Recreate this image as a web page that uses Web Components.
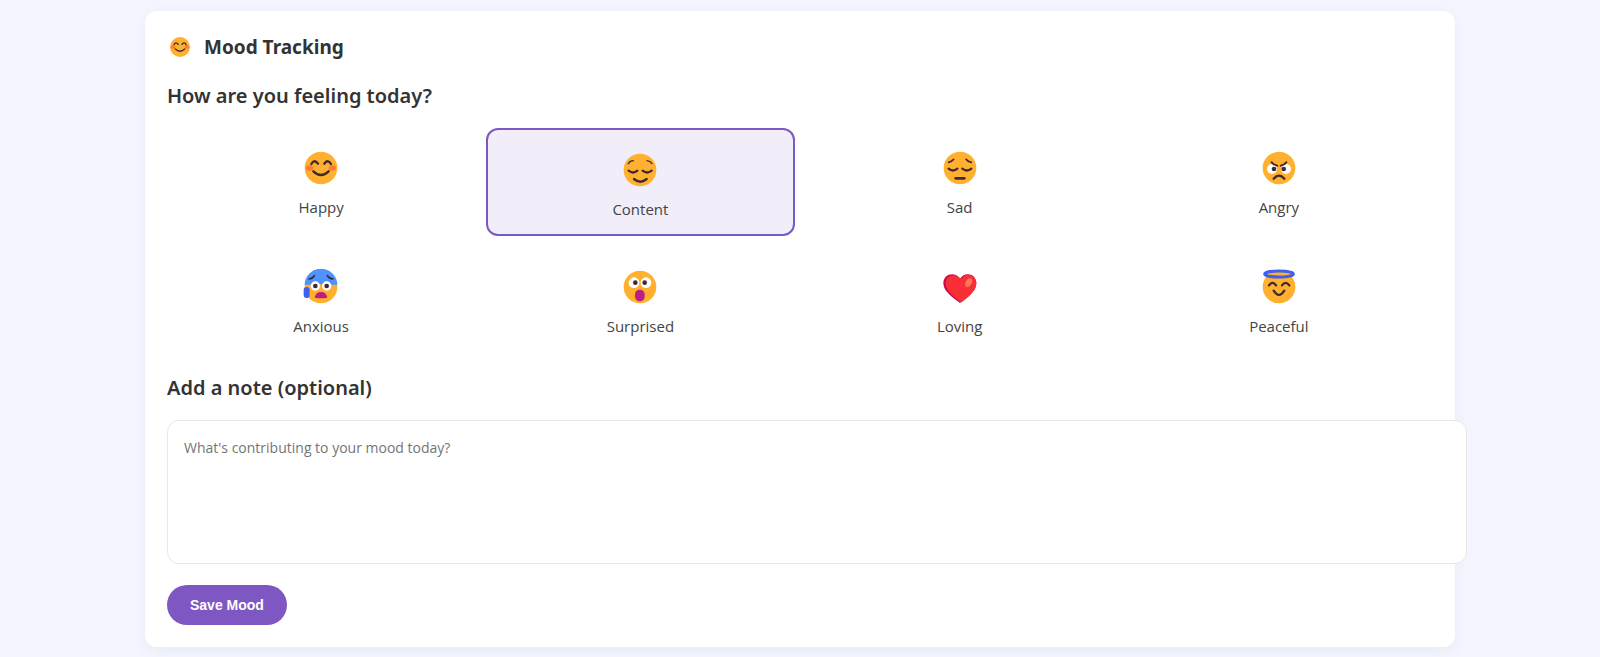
<!DOCTYPE html>
<html lang="en">
<head>
<meta charset="utf-8">
<meta name="viewport" content="width=device-width, initial-scale=1">
<title>Mood Tracking</title>
<style>
  body { margin: 0; padding: 11px 22px 10px; background: #f3f6ff; color: #333; font-family: "Open Sans", "Noto Sans", sans-serif; font-size: 15px; }
</style>
</head>
<body>
<mood-card>
  <mood-face slot="icon" name="happy" style="--size: 22px"></mood-face>
  <span slot="title">Mood Tracking</span>
  <section-title>How are you feeling today?</section-title>
  <mood-grid>
    <mood-option face="happy">Happy</mood-option>
    <mood-option face="content" selected>Content</mood-option>
    <mood-option face="sad">Sad</mood-option>
    <mood-option face="angry">Angry</mood-option>
    <mood-option face="anxious">Anxious</mood-option>
    <mood-option face="surprised">Surprised</mood-option>
    <mood-option face="loving">Loving</mood-option>
    <mood-option face="peaceful">Peaceful</mood-option>
  </mood-grid>
  <mood-note placeholder="What's contributing to your mood today?">Add a note (optional)</mood-note>
  <save-button>Save Mood</save-button>
</mood-card>

<script>
const shadow = (el, html) => {
  const t = document.createElement('template');
  t.innerHTML = html;
  el.attachShadow({ mode: 'open' }).append(t.content.cloneNode(true));
  return el.shadowRoot;
};

const head = '<circle cx="54" cy="54" r="49" fill="#ffb02e"/>';
const line = (d, w = 7) => `<path d="${d}" fill="none" stroke="#402a32" stroke-width="${w}" stroke-linecap="round"/>`;
const eyes = (x1, x2, y, r, p1 = x1, p2 = x2) =>
  `<g fill="#fff"><circle cx="${x1}" cy="${y}" r="${r}"/><circle cx="${x2}" cy="${y}" r="${r}"/></g>
   <g fill="#402a32"><circle cx="${p1}" cy="${y}" r="7"/><circle cx="${p2}" cy="${y}" r="7"/></g>`;

const FACES = {
  happy: head + '<g fill="#ff7a35"><ellipse cx="20" cy="54" rx="11" ry="8"/><ellipse cx="88" cy="54" rx="11" ry="8"/></g>'
    + line('M25 42Q34 26 45 41M64 41Q74 26 84 42') + line('M31 64Q54 86 77 64'),
  content: head + line('M19 35Q24 26 34 26M75 26Q84 27 90 35', 4)
    + line('M20 56Q33 67 46 56M62 56Q75 67 89 56') + line('M36 81Q55 97 74 81'),
  sad: head + line('M20 37Q29 36 35 28M72 28Q78 36 88 37', 5)
    + line('M20 56Q33 67 46 56M61 56Q75 67 88 56') + line('M41 85H67', 8),
  angry: head + eyes(33, 75, 57, 15, 39, 68) + line('M32 37Q38 45 49 47M76 37Q70 45 59 47', 6) + line('M38 86Q54 68 70 86'),
  anxious: head + '<path d="M5 48A49 49 0 0 1 103 48Q54 44 5 48Z" fill="#5092ff"/>' + eyes(37, 71, 51, 14)
    + line('M18 30Q29 29 34 20M73 20Q79 29 90 30', 5)
    + '<path d="M35 86Q38 69 54 69T73 86Q54 90 35 86Z" fill="#bb1d80"/><rect x="2" y="54" width="18" height="33" rx="9" fill="#3f5fee"/>',
  surprised: head + eyes(36, 72, 41, 16, 40, 68) + '<rect x="39" y="62" width="29" height="35" rx="14" fill="#bb1d80"/>',
  loving: '<path d="M54 102C34 87 4 68 4 43C4 14 39 6 54 29C69 6 103 14 103 43C103 68 74 87 54 102Z" fill="#ca0b4a"/><path d="M58 100C39 86 11 66 11 43C11 18 42 10 57 31C71 8 103 16 103 43C103 68 74 88 58 100Z" fill="#f92f36"/><ellipse cx="80" cy="41" rx="9" ry="14" transform="rotate(28 80 41)" fill="#ff785c"/>',
  peaceful: head + '<ellipse cx="54" cy="15" rx="43" ry="9" fill="#ffb02e" stroke="#3f5fee" stroke-width="9"/>'
    + line('M24 49Q35 34 45 49M63 49Q74 34 85 49') + line('M38 65Q54 90 70 65')
};

customElements.define('mood-face', class extends HTMLElement {
  connectedCallback() {
    if (this.shadowRoot) return;
    shadow(this, `<style>
      :host { display: block; width: var(--size, 36px); height: var(--size, 36px); }
      svg { display: block; width: 100%; height: 100%; }
    </style><svg viewBox="0 0 108 108" aria-hidden="true">${FACES[this.getAttribute('name')]}</svg>`);
  }
});

customElements.define('mood-card', class extends HTMLElement {
  constructor() {
    super();
    shadow(this, `<style>
      :host { display: block; box-sizing: border-box; max-width: 1310px; margin: 0 auto; padding: 22px; background: #fff; border-radius: 12px; box-shadow: 0 4px 16px rgba(0, 0, 0, .05); }
      header { display: flex; align-items: center; gap: 11px; margin-bottom: 21px; }
      .icon { width: 26px; display: flex; justify-content: center; }
      h2 { margin: 0; font-family: "Noto Sans", sans-serif; font-size: 19px; line-height: 28px; font-weight: 700; }
    </style><header><div class="icon"><slot name="icon"></slot></div><h2><slot name="title"></slot></h2></header><slot></slot>`);
  }
});

customElements.define('section-title', class extends HTMLElement {
  constructor() {
    super();
    shadow(this, `<style>
      :host { display: block; margin-bottom: 18px; }
      h3 { margin: 0; font-family: "Noto Sans", sans-serif; font-size: 20px; line-height: 28px; font-weight: 600; }
    </style><h3><slot></slot></h3>`);
  }
});

customElements.define('mood-grid', class extends HTMLElement {
  constructor() {
    super();
    shadow(this, `<style>
      :host { display: grid; grid-template-columns: repeat(4, 1fr); gap: 11px; margin-bottom: 23px; }
      @media (max-width: 600px) { :host { grid-template-columns: repeat(2, 1fr); } }
    </style><slot></slot>`);
    this.addEventListener('click', e => {
      const option = e.target.closest('mood-option');
      if (option) for (const o of this.children) o.toggleAttribute('selected', o === option);
    });
  }
});

customElements.define('mood-option', class extends HTMLElement {
  static observedAttributes = ['selected'];
  connectedCallback() {
    if (this.shadowRoot) return;
    shadow(this, `<style>
      :host { display: grid; }
      button { display: flex; flex-direction: column; align-items: center; margin: 0; padding: 16px 16px 15px; border: 0; border-radius: 12px; background: none; color: #444; font: inherit; line-height: 20px; cursor: pointer; }
      .face { display: flex; align-items: center; height: 48px; margin-bottom: 5px; }
      :host([selected]) button { border: 2px solid #7e57c2; background: #f1edf9; }
    </style><button type="button"><span class="face"><mood-face name="${this.getAttribute('face')}"></mood-face></span><span><slot></slot></span></button>`);
    this.attributeChangedCallback();
  }
  attributeChangedCallback() {
    this.shadowRoot?.querySelector('button').setAttribute('aria-pressed', this.hasAttribute('selected'));
  }
});

customElements.define('mood-note', class extends HTMLElement {
  connectedCallback() {
    if (this.shadowRoot) return;
    shadow(this, `<style>
      :host { display: block; margin-bottom: 21px; }
      label { display: block; margin-bottom: 18px; font-family: "Noto Sans", sans-serif; font-size: 20px; line-height: 28px; font-weight: 600; }
      textarea { display: block; box-sizing: content-box; width: 100%; height: 110px; margin: 0; padding: 16px; border: 1px solid #e8e8e8; border-radius: 12px; background: #fff; color: inherit; font: inherit; font-size: 14px; line-height: 22px; resize: none; }
      textarea::placeholder { color: #757575; }
    </style><label for="note"><slot></slot></label><textarea id="note"></textarea>`);
    this.shadowRoot.querySelector('textarea').placeholder = this.getAttribute('placeholder');
  }
});

customElements.define('save-button', class extends HTMLElement {
  constructor() {
    super();
    shadow(this, `<style>
      :host { display: flex; }
      button { height: 40px; margin: 0; padding: 0 23px; border: 0; border-radius: 20px; background: #7e57c2; color: #fff; font: 700 14px "Liberation Sans", Arial, sans-serif; cursor: pointer; }
    </style><button type="button"><slot></slot></button>`);
  }
});
</script>
</body>
</html>
